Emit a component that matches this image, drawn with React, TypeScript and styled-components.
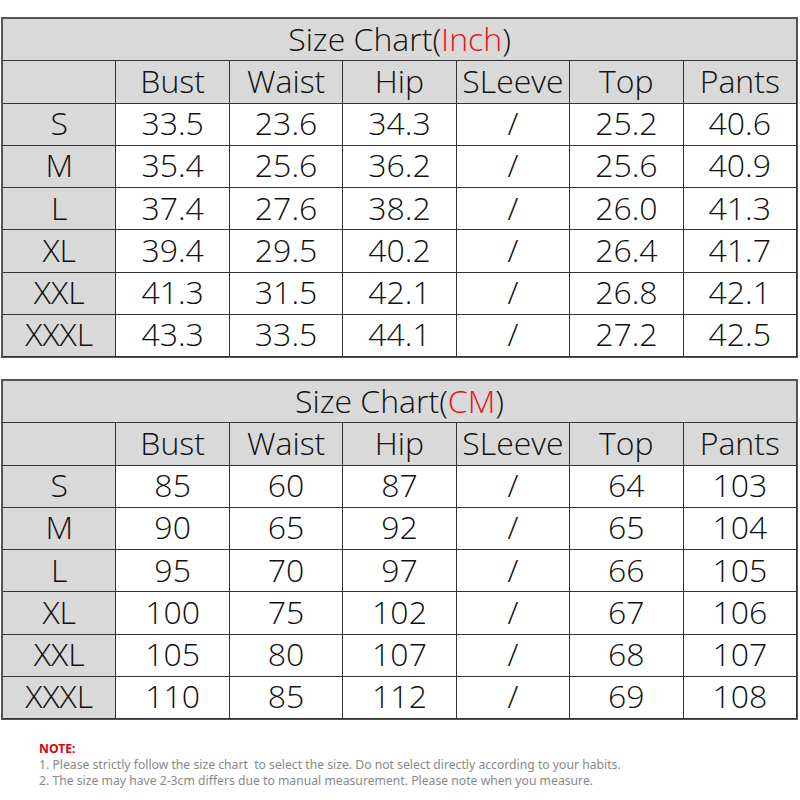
import React from 'react';
import styled, { createGlobalStyle } from 'styled-components';

const GlobalStyle = createGlobalStyle`
  body {
    margin: 0;
    background: #fff;
  }
`;

const StyledPage = styled.div`
  width: 800px;
  height: 800px;
  padding: 17px 2px 0px 1px;
  box-sizing: border-box;
  display: flex;
  flex-direction: column;
  gap: 21px;
  font-family: 'Open Sans', Lato, sans-serif;
  font-weight: 300;
  color: #111;
`;

const StyledChart = styled.div`
  display: grid;
  grid-template-columns: repeat(7, 1fr);
  grid-template-rows: repeat(8, 42.25px);
  border: 2px solid #555;
  border-right-width: 1px;
  border-bottom-width: 1px;
  box-sizing: border-box;
`;

const StyledTitle = styled.div`
  grid-column: 1 / -1;
  display: flex;
  align-items: center;
  justify-content: center;
  padding-bottom: 2px;
  background: #d9d9d9;
  border-right: 1px solid #555;
  border-bottom: 1px solid #333;
  font-size: 32px;
  line-height: 1;
`;

const StyledRed = styled.span`
  color: #e8141b;
`;

const StyledCell = styled.div<{ $shaded?: boolean }>`
  display: flex;
  align-items: center;
  justify-content: center;
  padding-bottom: 2px;
  background: ${(p) => (p.$shaded ? '#d9d9d9' : '#fff')};
  border-right: 1px solid #333;
  border-bottom: 1px solid #333;
  font-size: 32px;
  line-height: 1;
  white-space: nowrap;
`;

const StyledNotes = styled.div`
  padding-left: 38px;
  font-family: 'Noto Sans', sans-serif;
  font-weight: 400;
  font-size: 12.2px;
  line-height: 16px;
  color: #888;
  white-space: pre;
`;

const StyledNoteHead = styled.div`
  color: #d9000d;
  font-weight: 700;
`;

const headers = ['Bust', 'Waist', 'Hip', 'SLeeve', 'Top', 'Pants'];

const inchRows = [
  ['S', '33.5', '23.6', '34.3', '/', '25.2', '40.6'],
  ['M', '35.4', '25.6', '36.2', '/', '25.6', '40.9'],
  ['L', '37.4', '27.6', '38.2', '/', '26.0', '41.3'],
  ['XL', '39.4', '29.5', '40.2', '/', '26.4', '41.7'],
  ['XXL', '41.3', '31.5', '42.1', '/', '26.8', '42.1'],
  ['XXXL', '43.3', '33.5', '44.1', '/', '27.2', '42.5'],
];

const cmRows = [
  ['S', '85', '60', '87', '/', '64', '103'],
  ['M', '90', '65', '92', '/', '65', '104'],
  ['L', '95', '70', '97', '/', '66', '105'],
  ['XL', '100', '75', '102', '/', '67', '106'],
  ['XXL', '105', '80', '107', '/', '68', '107'],
  ['XXXL', '110', '85', '112', '/', '69', '108'],
];

const SizeChart: React.FC<{ unit: string; rows: string[][] }> = ({ unit, rows }) => (
  <StyledChart>
    <StyledTitle>
      Size Chart(<StyledRed>{unit}</StyledRed>)
    </StyledTitle>
    <StyledCell $shaded />
    {headers.map((h) => (
      <StyledCell key={h} $shaded>
        {h}
      </StyledCell>
    ))}
    {rows.map((row) =>
      row.map((value, i) => (
        <StyledCell key={row[0] + i} $shaded={i === 0}>
          {value}
        </StyledCell>
      ))
    )}
  </StyledChart>
);

const App: React.FC = () => (
  <>
    <GlobalStyle />
    <StyledPage>
      <SizeChart unit="Inch" rows={inchRows} />
      <SizeChart unit="CM" rows={cmRows} />
      <StyledNotes>
        <StyledNoteHead>NOTE:</StyledNoteHead>
        <div>1. Please strictly follow the size chart  to select the size. Do not select directly according to your habits.</div>
        <div>2. The size may have 2-3cm differs due to manual measurement. Please note when you measure.</div>
      </StyledNotes>
    </StyledPage>
  </>
);

export default App;
